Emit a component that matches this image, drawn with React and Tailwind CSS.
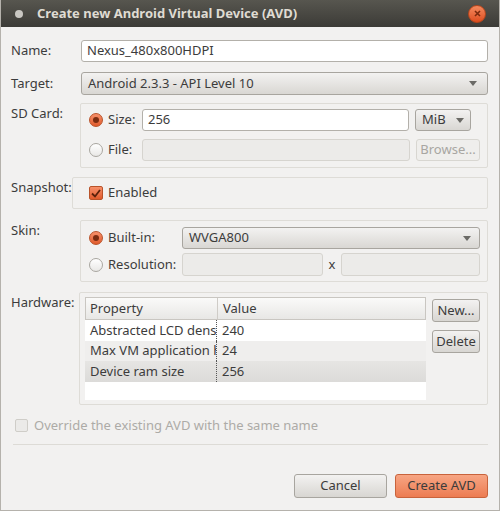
import React from "react";

const font = { fontFamily: '"Noto Sans", "Open Sans", sans-serif' };

function Radio({ checked }) {
  return checked ? (
    <span className="w-[14px] h-[14px] rounded-full border border-[#b9532a] bg-gradient-to-b from-[#f7906a] to-[#e05a2a] flex items-center justify-center shrink-0">
      <span className="w-[6px] h-[6px] rounded-full bg-[#7a2c10]" />
    </span>
  ) : (
    <span className="w-[14px] h-[14px] rounded-full border border-[#a9a6a0] bg-gradient-to-b from-white to-[#e9e8e6] shrink-0" />
  );
}

function Arrow() {
  return (
    <svg width="8" height="5" viewBox="0 0 8 5">
      <path d="M0 0h8L4 5z" fill="#6b6a66" />
    </svg>
  );
}

function Field({ value, disabled, className = "" }) {
  return (
    <div
      className={`rounded-[3px] border px-[5px] flex items-center text-[13px] ${
        disabled ? "border-[#d6d4cf] bg-[#ecebe9]" : "border-[#b3b0aa] bg-white text-[#3c3c3c]"
      } ${className}`}
    >
      {value}
    </div>
  );
}

function Combo({ value, className = "" }) {
  return (
    <div
      className={`rounded-[3px] border border-[#a8a59f] bg-gradient-to-b from-[#f3f2f1] to-[#d9d7d3] px-[6px] flex items-center justify-between text-[13px] text-[#3c3c3c] ${className}`}
    >
      <span>{value}</span>
      <Arrow />
    </div>
  );
}

function Button({ children, className = "", disabled }) {
  return (
    <div
      className={`rounded-[3px] border flex items-center justify-center text-[13px] ${
        disabled
          ? "border-[#d8d6d1] bg-[#efeeec] text-[#a8a6a2]"
          : "border-[#a8a59f] bg-gradient-to-b from-[#f3f2f1] to-[#d8d6d2] text-[#3c3c3c]"
      } ${className}`}
    >
      {children}
    </div>
  );
}

const rows = [
  ["Abstracted LCD density", "240", "bg-white"],
  ["Max VM application heap size", "24", "bg-[#efeeed]"],
  ["Device ram size", "256", "bg-gradient-to-b from-[#e6e5e3] to-[#dcdbd9]"],
];

export default function App() {
  return (
    <div className="w-[500px] h-[511px] bg-[#f2f1f0] flex flex-col overflow-hidden text-[#3c3c3c] border-x border-b border-[#b5b2ac]" style={font}>
      {/* title bar */}
      <div className="h-[27px] shrink-0 bg-gradient-to-b from-[#57564f] to-[#3c3b37] flex items-center px-[14px] -mx-px">
        <span className="w-[8px] h-[8px] rounded-full bg-[#c9c7c2] mr-[14px] ml-[1px]" />
        <span className="text-[13px] font-bold text-[#dfdbd2]">
          Create new Android Virtual Device (AVD)
        </span>
        <span className="ml-auto w-[18px] h-[18px] rounded-full bg-gradient-to-b from-[#f3895d] to-[#dd4c1c] border border-[#b8461c] flex items-center justify-center">
          <svg width="7" height="7" viewBox="0 0 7 7">
            <path d="M1 1l5 5M6 1l-5 5" stroke="#7a2a0e" strokeWidth="1.6" />
          </svg>
        </span>
      </div>

      <div className="flex flex-col pl-[10px] pr-[11px] text-[13px]">
        {/* Name */}
        <div className="flex items-center mt-[13px]">
          <span className="w-[70px]">Name:</span>
          <Field value="Nexus_480x800HDPI" className="flex-1 h-[22px]" />
        </div>
        {/* Target */}
        <div className="flex items-center mt-[10px]">
          <span className="w-[70px]">Target:</span>
          <Combo value="Android 2.3.3 - API Level 10" className="flex-1 h-[23px] pr-[10px]" />
        </div>

        {/* SD Card */}
        <div className="flex mt-[8px]">
          <span className="w-[69px] pt-[1px]">SD Card:</span>
          <div className="flex-1 h-[65px] border border-[#dedcd7] rounded-[2px] pl-[8px] pr-[7px] pt-[5px] flex flex-col gap-[8px]">
            <div className="flex items-center">
              <Radio checked />
              <span className="w-[39px] pl-[5px]">Size:</span>
              <Field value="256" className="flex-1 h-[22px]" />
              <Combo value="MiB" className="w-[56px] ml-[6px] mr-[9px] h-[22px]" />
            </div>
            <div className="flex items-center">
              <Radio />
              <span className="w-[39px] pl-[5px]">File:</span>
              <Field disabled className="flex-1 h-[22px]" />
              <Button disabled className="w-[64px] h-[22px] ml-[6px]">Browse...</Button>
            </div>
          </div>
        </div>

        {/* Snapshot */}
        <div className="flex mt-[9px]">
          <span className="w-[61px] pt-[1px]">Snapshot:</span>
          <div className="flex-1 h-[32px] border border-[#dedcd7] rounded-[2px] pl-[16px] flex items-center">
            <span className="w-[14px] h-[14px] rounded-[2px] border border-[#b9532a] bg-gradient-to-b from-[#f7906a] to-[#e05a2a] flex items-center justify-center">
              <svg width="10" height="9" viewBox="0 0 10 9">
                <path d="M1 4.5l3 3L9 1" fill="none" stroke="#5a200a" strokeWidth="1.8" />
              </svg>
            </span>
            <span className="pl-[5px]">Enabled</span>
          </div>
        </div>

        {/* Skin */}
        <div className="flex mt-[11px]">
          <span className="w-[69px] pt-[1px]">Skin:</span>
          <div className="flex-1 h-[62px] border border-[#dedcd7] rounded-[2px] pl-[8px] pr-[7px] pt-[6px] flex flex-col gap-[4px]">
            <div className="flex items-center">
              <Radio checked />
              <span className="w-[79px] pl-[5px]">Built-in:</span>
              <Combo value="WVGA800" className="flex-1 pr-[8px] h-[22px]" />
            </div>
            <div className="flex items-center">
              <Radio />
              <span className="w-[79px] pl-[5px]">Resolution:</span>
              <Field disabled className="w-[141px] h-[23px]" />
              <span className="w-[18px] text-center">x</span>
              <Field disabled className="flex-1 h-[23px]" />
            </div>
          </div>
        </div>

        {/* Hardware */}
        <div className="flex mt-[10px]">
          <span className="w-[69px] pt-[1px]">Hardware:</span>
          <div className="flex-1 h-[113px] border border-[#dedcd7] rounded-[2px] pl-[5px] pr-[7px] pt-[4px] pb-[4px] flex gap-[6px]">
            <div className="w-[341px] bg-white flex flex-col">
              <div className="h-[23px] flex items-center bg-gradient-to-b from-[#fafaf9] to-[#e8e7e5] border border-[#c9c6c1]">
                <span className="w-[132px] pl-[4px] border-r border-[#cfccc7] h-full flex items-center">Property</span>
                <span className="pl-[5px]">Value</span>
              </div>
              {rows.map(([p, v, bg]) => (
                <div key={p} className={`h-[20.5px] flex items-center ${bg}`}>
                  <span className="w-[132px] pl-[5px] whitespace-nowrap overflow-hidden border-r border-dotted border-[#555] h-full flex items-center">
                    {p}
                  </span>
                  <span className="pl-[5px]">{v}</span>
                </div>
              ))}
            </div>
            <div className="flex flex-col gap-[8px] pt-[2px]">
              <Button className="w-[48px] h-[23px]">New...</Button>
              <Button className="w-[48px] h-[23px]">Delete</Button>
            </div>
          </div>
        </div>

        {/* Override */}
        <div className="flex items-center mt-[11px] ml-[4px] text-[#adaba7]">
          <span className="w-[13px] h-[13px] rounded-[2px] border border-[#cfcdc8] bg-[#ebeae8]" />
          <span className="pl-[6px]">Override the existing AVD with the same name</span>
        </div>

        <div className="mt-[8px] ml-[2px] border-t border-[#dddbd6]" />

        {/* bottom buttons */}
        <div className="flex justify-end gap-[8px] mt-[29px]">
          <Button className="w-[93px] h-[24px]">Cancel</Button>
          <div className="w-[93px] h-[24px] rounded-[3px] border border-[#c8633c] bg-gradient-to-b from-[#f7a583] to-[#ec7c52] flex items-center justify-center text-[13px] text-[#3c3c3c]">
            Create AVD
          </div>
        </div>
      </div>
    </div>
  );
}
